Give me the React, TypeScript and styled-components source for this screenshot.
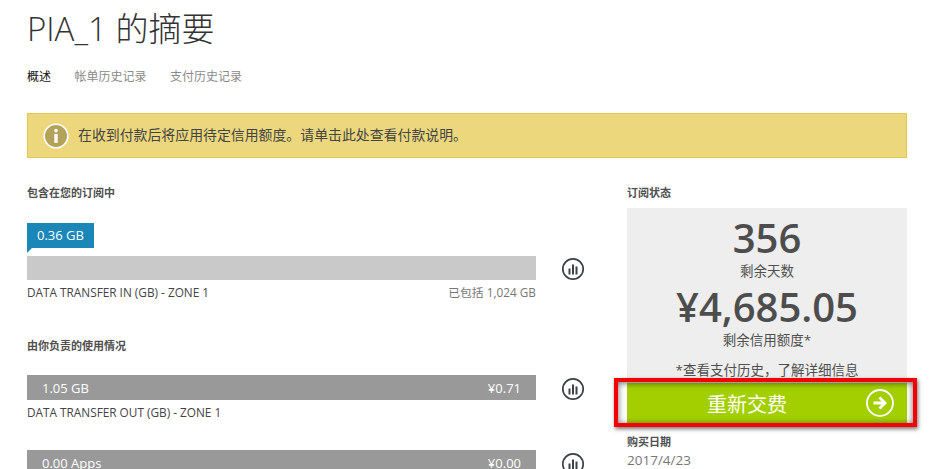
import styled, { createGlobalStyle } from "styled-components";

const Global = createGlobalStyle`
  html, body {
    margin: 0;
    height: 469px;
    overflow: hidden;
    background: #fff;
    font-family: "Open Sans", "Noto Sans CJK SC", sans-serif;
  }
`;

const Page = styled.div`
  width: 880px;
  padding-left: 27px;
`;

const Title = styled.h1`
  margin: 0;
  height: 60px;
  font-size: 33px;
  line-height: 58px;
  font-weight: 300;
  color: #333;
`;

const Tabs = styled.nav`
  display: flex;
  gap: 23.5px;
  height: 36px;
  padding-top: 9px;
  box-sizing: border-box;
`;

const Tab = styled.a<{ $active?: boolean }>`
  font-size: 12px;
  line-height: 16px;
  color: ${(p) => (p.$active ? "#111" : "#8a8a8a")};
`;

const Banner = styled.div`
  display: flex;
  align-items: center;
  gap: 9px;
  height: 45px;
  margin-top: 17px;
  padding: 0 0 3px 15px;
  box-sizing: border-box;
  background: #ecd77d;
  border: 1px solid #e4c654;
  font-size: 13.9px;
  color: #444;
`;

const BannerIcon = styled.svg`
  width: 26px;
  height: 26px;
  margin-top: 3px;
`;

const Columns = styled.div`
  display: flex;
  justify-content: space-between;
  margin-top: 27px;
`;

const Left = styled.section`
  width: 560px;
`;

const Right = styled.aside`
  width: 280px;
`;

const Heading = styled.h2`
  margin: 0;
  font-size: 11px;
  line-height: 16px;
  font-weight: 700;
  color: #505050;
`;

const Meter = styled.div`
  display: grid;
  grid-template-columns: 509px 1fr;
  align-items: center;
`;

const MeterIcon = styled.svg`
  width: 24px;
  height: 24px;
  justify-self: end;
  margin: 1px 2px -1px 0;
`;

const Tag = styled.div`
  position: relative;
  width: 67px;
  height: 25px;
  margin: 22px 0 8px;
  box-sizing: border-box;
  padding-left: 10px;
  background: #1a87b8;
  color: #fff;
  font-size: 13px;
  line-height: 24px;

  &::after {
    content: "";
    position: absolute;
    left: 0;
    top: 25px;
    border-top: 5px solid #1a87b8;
    border-right: 5px solid transparent;
  }
`;

const Track = styled.div`
  height: 24px;
  background: #c9c9c9;
`;

const UsageBar = styled.div`
  display: flex;
  justify-content: space-between;
  align-items: center;
  height: 25px;
  padding: 0 15px;
  background: #999;
  color: #fff;
  font-size: 13px;
`;

const Caption = styled.div`
  display: flex;
  justify-content: space-between;
  width: 509px;
  margin-top: 4px;
  font-size: 11.8px;
  line-height: 17px;
  color: #444;
`;

const Muted = styled.span`
  color: #777;
`;

const UsageHeading = styled(Heading)`
  margin: 37px 0 21px;
`;

const UsageGap = styled.div`
  height: 29px;
`;

const StatusPanel = styled.div`
  height: 175px;
  margin-top: 7px;
  display: flex;
  flex-direction: column;
  align-items: center;
  background: #eee;
  color: #505050;
`;

const BigNumber = styled.div`
  font-size: 40px;
  line-height: 46px;
  font-weight: 600;
  color: #4d4d4d;
  margin-top: 4px;
`;

const DaysNumber = styled(BigNumber)`
  margin-top: 7px;
`;

const StatusLabel = styled.div`
  font-size: 13.5px;
  line-height: 18px;
  margin-top: 1px;
`;

const Note = styled(StatusLabel)`
  margin-top: 12px;
`;

const RenewWrap = styled.div`
  position: relative;
  height: 44px;
`;

const Renew = styled.button`
  position: relative;
  width: 100%;
  height: 40px;
  border: 0;
  padding: 0 40px 0 0;
  background: #a3cf00;
  color: #fff;
  font: inherit;
  font-size: 20px;
  display: flex;
  align-items: center;
  justify-content: center;
  box-sizing: border-box;
`;

const RenewArrow = styled.svg`
  position: absolute;
  right: 13px;
  top: 6px;
  width: 28px;
  height: 28px;
`;

const Highlight = styled.div`
  position: absolute;
  left: -13px;
  right: -10px;
  top: -5px;
  height: 49px;
  box-sizing: border-box;
  border: 4px solid #f40000;
  box-shadow: 1px 2px 4px rgba(0, 0, 0, 0.55), inset 0 1px 6px rgba(0, 0, 0, 0.6);
  pointer-events: none;
`;

const Purchase = styled.div`
  margin-top: 7px;
`;

const PurchaseDate = styled.div`
  font-size: 13.5px;
  line-height: 20px;
  color: #777;
`;

function ChartIcon() {
  return (
    <MeterIcon viewBox="0 0 24 24">
      <circle cx="12" cy="12" r="10.2" fill="none" stroke="#3a4148" strokeWidth="1.7" />
      <path d="M7.5 11.5h2v6h-2zM11 7.5h2v10h-2zM14.5 9.5h2v8h-2z" fill="#3a4148" />
    </MeterIcon>
  );
}

export default function App() {
  return (
    <>
      <Global />
      <Page>
        <Title>PIA_1 的摘要</Title>
        <Tabs>
          <Tab $active>概述</Tab>
          <Tab>帐单历史记录</Tab>
          <Tab>支付历史记录</Tab>
        </Tabs>
        <Banner>
          <BannerIcon viewBox="0 0 26 26">
            <circle cx="13" cy="13" r="11.8" fill="#b3a25a" stroke="#fff" strokeWidth="1.6" />
            <circle cx="13" cy="7.6" r="1.8" fill="#fff" />
            <rect x="11.3" y="10.8" width="3.4" height="9" fill="#fff" />
          </BannerIcon>
          在收到付款后将应用待定信用额度。请单击此处查看付款说明。
        </Banner>
        <Columns>
          <Left>
            <Heading>包含在您的订阅中</Heading>
            <Tag>0.36 GB</Tag>
            <Meter>
              <Track />
              <ChartIcon />
            </Meter>
            <Caption>
              <span>DATA TRANSFER IN (GB) - ZONE 1</span>
              <Muted>已包括 1,024 GB</Muted>
            </Caption>
            <UsageHeading>由你负责的使用情况</UsageHeading>
            <Meter>
              <UsageBar>
                <span>1.05 GB</span>
                <span>¥0.71</span>
              </UsageBar>
              <ChartIcon />
            </Meter>
            <Caption>
              <span>DATA TRANSFER OUT (GB) - ZONE 1</span>
            </Caption>
            <UsageGap />
            <Meter>
              <UsageBar>
                <span>0.00 Apps</span>
                <span>¥0.00</span>
              </UsageBar>
              <ChartIcon />
            </Meter>
          </Left>
          <Right>
            <Heading>订阅状态</Heading>
            <StatusPanel>
              <DaysNumber>356</DaysNumber>
              <StatusLabel>剩余天数</StatusLabel>
              <BigNumber>¥4,685.05</BigNumber>
              <StatusLabel>剩余信用额度*</StatusLabel>
              <Note>*查看支付历史，了解详细信息</Note>
            </StatusPanel>
            <RenewWrap>
              <Renew>
                重新交费
                <RenewArrow viewBox="0 0 28 28">
                  <circle cx="14" cy="14" r="13" fill="none" stroke="#fff" strokeWidth="1.8" />
                  <path d="M7.5 14h11M13.5 8.5l5.5 5.5-5.5 5.5" fill="none" stroke="#fff" strokeWidth="2.8" />
                </RenewArrow>
              </Renew>
              <Highlight />
            </RenewWrap>
            <Purchase>
              <Heading>购买日期</Heading>
              <PurchaseDate>2017/4/23</PurchaseDate>
            </Purchase>
          </Right>
        </Columns>
      </Page>
    </>
  );
}
